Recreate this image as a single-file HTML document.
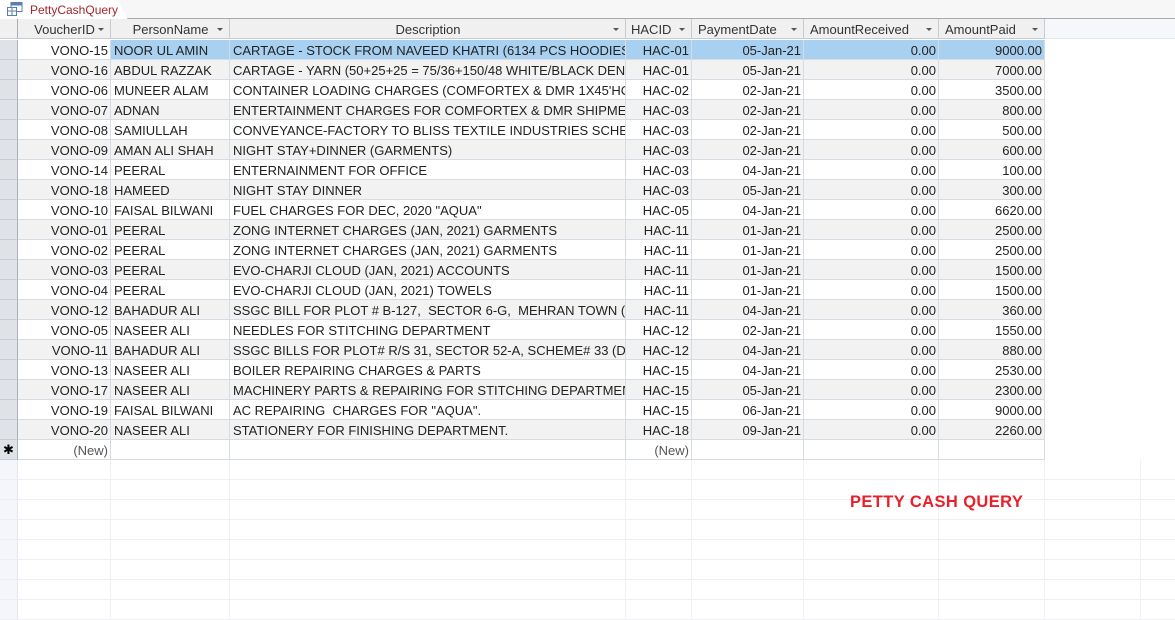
<!DOCTYPE html><html><head><meta charset="utf-8"><style>
*{margin:0;padding:0;box-sizing:border-box}
body{width:1175px;height:615px;overflow:hidden;background:#fff;font-family:"Liberation Sans",Arial,sans-serif;font-size:13px;color:#222;position:relative}
.tabbar{position:absolute;left:0;top:0;width:1175px;height:19px;background:#f7f7f7;border-bottom:1px solid #a9a9a9}
.tab{position:absolute;left:0;top:0;width:128px;height:20px;background:#fff;clip-path:polygon(0 0,118px 0,128px 20px,0 20px)}
.tab span{position:absolute;left:30px;top:3px;color:#a4262c;font-size:12px}
.row{position:absolute;left:0;height:20px;width:1175px}
.c{position:absolute;top:0;height:20px;border-right:1px solid #d5dce4;border-bottom:1px solid #d5dce4;white-space:nowrap;overflow:hidden;line-height:21px;padding:0 2px 0 3px}
.r{text-align:right}
.h .c{background:#f0f0f0;border-right:1px solid #c6ccd3;border-bottom:1px solid #c6ccd3;color:#333;text-align:center}
.h .c i{position:absolute;right:6px;top:9px;border:3px solid transparent;border-top:3px solid #555}
.s{left:0;width:18px;background:#dfe3e8;border-right:1px solid #aab0b8!important;border-bottom:1px solid #c6ccd3!important;padding:0}
.a{left:18px;width:93px}.b{left:111px;width:119px}.d{left:230px;width:396px}.e{left:626px;width:66px}.f{left:692px;width:112px}.g{left:804px;width:135px}.k{left:939px;width:106px}
.alt .c{background:#f2f2f2}
.alt .s{background:#dfe3e8}
.sel .c{background:#a8d0f0}
.sel .a{background:#fff}
.emp .c{border-color:#eef0f3}
.emp .s{background:#f4f6fb;border-right:1px solid #e4e8ee!important;border-bottom:1px solid #eceef2!important}
.x{position:absolute;top:0;height:20px;border-right:1px solid #eef0f3;border-bottom:1px solid #eef0f3}
</style></head><body>
<div class="tabbar"><div class="tab"><svg style="position:absolute;left:7px;top:2px" width="16" height="14"><rect x="4" y="0.5" width="11" height="9" fill="#fff" stroke="#5a7fae"/><rect x="4" y="0.5" width="11" height="3" fill="#5a7fae"/><rect x="0.5" y="5.5" width="9" height="8" fill="#fff" stroke="#5a7fae"/><line x1="0" y1="9" x2="10" y2="9" stroke="#5a7fae"/><line x1="5" y1="6" x2="5" y2="13" stroke="#5a7fae"/></svg><span>PettyCashQuery</span></div></div>
<div class="row h" style="top:19px"><div class="c s" style="background:#f0f0f0"></div><div class="c a">VoucherID<i></i></div><div class="c b">PersonName<i></i></div><div class="c d">Description<i></i></div><div class="c e" style="text-align:left;padding-left:5px">HACID<i></i></div><div class="c f" style="text-align:left;padding-left:6px">PaymentDate<i></i></div><div class="c g" style="text-align:left;padding-left:6px">AmountReceived<i></i></div><div class="c k" style="text-align:left;padding-left:6px">AmountPaid<i></i></div><div class="c" style="left:1045px;width:130px;background:#f6f7fb;border-right:none;border-bottom:1px solid #e4e8ee"></div></div>
<div class="row sel" style="top:40px"><div class="c s" style="background:#dfe3e8"></div><div class="c a r">VONO-15</div><div class="c b">NOOR UL AMIN</div><div class="c d">CARTAGE - STOCK FROM NAVEED KHATRI (6134 PCS HOODIES &amp; (</div><div class="c e r">HAC-01</div><div class="c f r">05-Jan-21</div><div class="c g r">0.00</div><div class="c k r">9000.00</div></div>
<div class="row alt" style="top:60px"><div class="c s"></div><div class="c a r">VONO-16</div><div class="c b">ABDUL RAZZAK</div><div class="c d">CARTAGE - YARN (50+25+25 = 75/36+150/48 WHITE/BLACK DENIE</div><div class="c e r">HAC-01</div><div class="c f r">05-Jan-21</div><div class="c g r">0.00</div><div class="c k r">7000.00</div></div>
<div class="row" style="top:80px"><div class="c s"></div><div class="c a r">VONO-06</div><div class="c b">MUNEER ALAM</div><div class="c d">CONTAINER LOADING CHARGES (COMFORTEX &amp; DMR 1X45'HC)</div><div class="c e r">HAC-02</div><div class="c f r">02-Jan-21</div><div class="c g r">0.00</div><div class="c k r">3500.00</div></div>
<div class="row alt" style="top:100px"><div class="c s"></div><div class="c a r">VONO-07</div><div class="c b">ADNAN</div><div class="c d">ENTERTAINMENT CHARGES FOR COMFORTEX &amp; DMR SHIPMENT</div><div class="c e r">HAC-03</div><div class="c f r">02-Jan-21</div><div class="c g r">0.00</div><div class="c k r">800.00</div></div>
<div class="row" style="top:120px"><div class="c s"></div><div class="c a r">VONO-08</div><div class="c b">SAMIULLAH</div><div class="c d">CONVEYANCE-FACTORY TO BLISS TEXTILE INDUSTRIES SCHEME #</div><div class="c e r">HAC-03</div><div class="c f r">02-Jan-21</div><div class="c g r">0.00</div><div class="c k r">500.00</div></div>
<div class="row alt" style="top:140px"><div class="c s"></div><div class="c a r">VONO-09</div><div class="c b">AMAN ALI SHAH</div><div class="c d">NIGHT STAY+DINNER (GARMENTS)</div><div class="c e r">HAC-03</div><div class="c f r">02-Jan-21</div><div class="c g r">0.00</div><div class="c k r">600.00</div></div>
<div class="row" style="top:160px"><div class="c s"></div><div class="c a r">VONO-14</div><div class="c b">PEERAL</div><div class="c d">ENTERNAINMENT FOR OFFICE</div><div class="c e r">HAC-03</div><div class="c f r">04-Jan-21</div><div class="c g r">0.00</div><div class="c k r">100.00</div></div>
<div class="row alt" style="top:180px"><div class="c s"></div><div class="c a r">VONO-18</div><div class="c b">HAMEED</div><div class="c d">NIGHT STAY DINNER</div><div class="c e r">HAC-03</div><div class="c f r">05-Jan-21</div><div class="c g r">0.00</div><div class="c k r">300.00</div></div>
<div class="row" style="top:200px"><div class="c s"></div><div class="c a r">VONO-10</div><div class="c b">FAISAL BILWANI</div><div class="c d">FUEL CHARGES FOR DEC, 2020 "AQUA"</div><div class="c e r">HAC-05</div><div class="c f r">04-Jan-21</div><div class="c g r">0.00</div><div class="c k r">6620.00</div></div>
<div class="row alt" style="top:220px"><div class="c s"></div><div class="c a r">VONO-01</div><div class="c b">PEERAL</div><div class="c d">ZONG INTERNET CHARGES (JAN, 2021) GARMENTS</div><div class="c e r">HAC-11</div><div class="c f r">01-Jan-21</div><div class="c g r">0.00</div><div class="c k r">2500.00</div></div>
<div class="row" style="top:240px"><div class="c s"></div><div class="c a r">VONO-02</div><div class="c b">PEERAL</div><div class="c d">ZONG INTERNET CHARGES (JAN, 2021) GARMENTS</div><div class="c e r">HAC-11</div><div class="c f r">01-Jan-21</div><div class="c g r">0.00</div><div class="c k r">2500.00</div></div>
<div class="row alt" style="top:260px"><div class="c s"></div><div class="c a r">VONO-03</div><div class="c b">PEERAL</div><div class="c d">EVO-CHARJI CLOUD (JAN, 2021) ACCOUNTS</div><div class="c e r">HAC-11</div><div class="c f r">01-Jan-21</div><div class="c g r">0.00</div><div class="c k r">1500.00</div></div>
<div class="row" style="top:280px"><div class="c s"></div><div class="c a r">VONO-04</div><div class="c b">PEERAL</div><div class="c d">EVO-CHARJI CLOUD (JAN, 2021) TOWELS</div><div class="c e r">HAC-11</div><div class="c f r">01-Jan-21</div><div class="c g r">0.00</div><div class="c k r">1500.00</div></div>
<div class="row alt" style="top:300px"><div class="c s"></div><div class="c a r">VONO-12</div><div class="c b">BAHADUR ALI</div><div class="c d">SSGC BILL FOR PLOT # B-127,&nbsp; SECTOR 6-G,&nbsp; MEHRAN TOWN (DEC,</div><div class="c e r">HAC-11</div><div class="c f r">04-Jan-21</div><div class="c g r">0.00</div><div class="c k r">360.00</div></div>
<div class="row" style="top:320px"><div class="c s"></div><div class="c a r">VONO-05</div><div class="c b">NASEER ALI</div><div class="c d">NEEDLES FOR STITCHING DEPARTMENT</div><div class="c e r">HAC-12</div><div class="c f r">02-Jan-21</div><div class="c g r">0.00</div><div class="c k r">1550.00</div></div>
<div class="row alt" style="top:340px"><div class="c s"></div><div class="c a r">VONO-11</div><div class="c b">BAHADUR ALI</div><div class="c d">SSGC BILLS FOR PLOT# R/S 31, SECTOR 52-A, SCHEME# 33 (DEC, 20</div><div class="c e r">HAC-12</div><div class="c f r">04-Jan-21</div><div class="c g r">0.00</div><div class="c k r">880.00</div></div>
<div class="row" style="top:360px"><div class="c s"></div><div class="c a r">VONO-13</div><div class="c b">NASEER ALI</div><div class="c d">BOILER REPAIRING CHARGES &amp; PARTS</div><div class="c e r">HAC-15</div><div class="c f r">04-Jan-21</div><div class="c g r">0.00</div><div class="c k r">2530.00</div></div>
<div class="row alt" style="top:380px"><div class="c s"></div><div class="c a r">VONO-17</div><div class="c b">NASEER ALI</div><div class="c d">MACHINERY PARTS &amp; REPAIRING FOR STITCHING DEPARTMENT.</div><div class="c e r">HAC-15</div><div class="c f r">05-Jan-21</div><div class="c g r">0.00</div><div class="c k r">2300.00</div></div>
<div class="row" style="top:400px"><div class="c s"></div><div class="c a r">VONO-19</div><div class="c b">FAISAL BILWANI</div><div class="c d">AC REPAIRING&nbsp; CHARGES FOR "AQUA".</div><div class="c e r">HAC-15</div><div class="c f r">06-Jan-21</div><div class="c g r">0.00</div><div class="c k r">9000.00</div></div>
<div class="row alt" style="top:420px"><div class="c s"></div><div class="c a r">VONO-20</div><div class="c b">NASEER ALI</div><div class="c d">STATIONERY FOR FINISHING DEPARTMENT.</div><div class="c e r">HAC-18</div><div class="c f r">09-Jan-21</div><div class="c g r">0.00</div><div class="c k r">2260.00</div></div>
<div class="row" style="top:440px"><div class="c s" style="text-align:center;font-size:13px;line-height:20px;color:#000">&#10033;</div><div class="c a r" style="color:#555">(New)</div><div class="c b"></div><div class="c d"></div><div class="c e r" style="color:#555">(New)</div><div class="c f"></div><div class="c g"></div><div class="c k"></div></div>
<div class="row emp" style="top:460px"><div class="c s"></div><div class="c a"></div><div class="c b"></div><div class="c d"></div><div class="c e"></div><div class="c f"></div><div class="c g"></div><div class="c k"></div><div class="x" style="left:1045px;width:96px"></div><div class="x" style="left:1141px;width:40px"></div></div>
<div class="row emp" style="top:480px"><div class="c s"></div><div class="c a"></div><div class="c b"></div><div class="c d"></div><div class="c e"></div><div class="c f"></div><div class="c g"></div><div class="c k"></div><div class="x" style="left:1045px;width:96px"></div><div class="x" style="left:1141px;width:40px"></div></div>
<div class="row emp" style="top:500px"><div class="c s"></div><div class="c a"></div><div class="c b"></div><div class="c d"></div><div class="c e"></div><div class="c f"></div><div class="c g"></div><div class="c k"></div><div class="x" style="left:1045px;width:96px"></div><div class="x" style="left:1141px;width:40px"></div></div>
<div class="row emp" style="top:520px"><div class="c s"></div><div class="c a"></div><div class="c b"></div><div class="c d"></div><div class="c e"></div><div class="c f"></div><div class="c g"></div><div class="c k"></div><div class="x" style="left:1045px;width:96px"></div><div class="x" style="left:1141px;width:40px"></div></div>
<div class="row emp" style="top:540px"><div class="c s"></div><div class="c a"></div><div class="c b"></div><div class="c d"></div><div class="c e"></div><div class="c f"></div><div class="c g"></div><div class="c k"></div><div class="x" style="left:1045px;width:96px"></div><div class="x" style="left:1141px;width:40px"></div></div>
<div class="row emp" style="top:560px"><div class="c s"></div><div class="c a"></div><div class="c b"></div><div class="c d"></div><div class="c e"></div><div class="c f"></div><div class="c g"></div><div class="c k"></div><div class="x" style="left:1045px;width:96px"></div><div class="x" style="left:1141px;width:40px"></div></div>
<div class="row emp" style="top:580px"><div class="c s"></div><div class="c a"></div><div class="c b"></div><div class="c d"></div><div class="c e"></div><div class="c f"></div><div class="c g"></div><div class="c k"></div><div class="x" style="left:1045px;width:96px"></div><div class="x" style="left:1141px;width:40px"></div></div>
<div class="row emp" style="top:600px"><div class="c s"></div><div class="c a"></div><div class="c b"></div><div class="c d"></div><div class="c e"></div><div class="c f"></div><div class="c g"></div><div class="c k"></div><div class="x" style="left:1045px;width:96px"></div><div class="x" style="left:1141px;width:40px"></div></div>
<div style="position:absolute;left:850px;top:493px;color:#e8202a;font-weight:bold;font-size:16.5px;letter-spacing:0.4px">PETTY CASH QUERY</div>
</body></html>
